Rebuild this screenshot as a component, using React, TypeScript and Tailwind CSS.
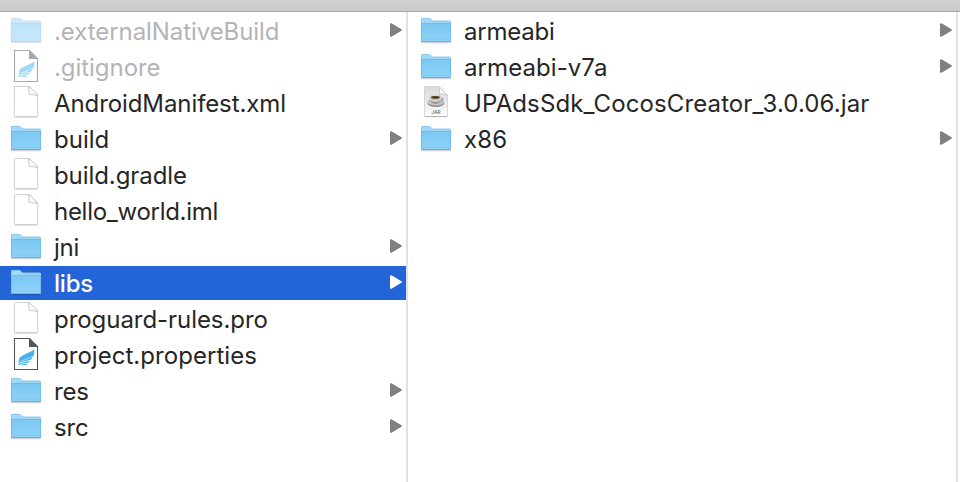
import React from "react";

type Kind = "folder" | "doc" | "wing" | "jar";
type Entry = { name: string; kind: Kind; dim?: boolean; selected?: boolean; tracking?: string };

const left: Entry[] = [
  { name: ".externalNativeBuild", kind: "folder", dim: true, tracking: "tracking-[-0.07px]" },
  { name: ".gitignore", kind: "wing", dim: true, tracking: "tracking-[-0.05px]" },
  { name: "AndroidManifest.xml", kind: "doc", tracking: "tracking-[-0.09px]" },
  { name: "build", kind: "folder" },
  { name: "build.gradle", kind: "doc", tracking: "tracking-[-0.08px]" },
  { name: "hello_world.iml", kind: "doc", tracking: "tracking-[-0.28px]" },
  { name: "jni", kind: "folder", tracking: "tracking-[-0.2px]" },
  { name: "libs", kind: "folder", selected: true, tracking: "tracking-[-0.2px]" },
  { name: "proguard-rules.pro", kind: "doc", tracking: "tracking-[-0.05px]" },
  { name: "project.properties", kind: "wing", tracking: "tracking-[0.04px]" },
  { name: "res", kind: "folder", tracking: "tracking-[-0.2px]" },
  { name: "src", kind: "folder", tracking: "tracking-[-0.1px]" },
];

const right: Entry[] = [
  { name: "armeabi", kind: "folder", tracking: "tracking-[-0.2px]" },
  { name: "armeabi-v7a", kind: "folder", tracking: "tracking-[0.08px]" },
  { name: "UPAdsSdk_CocosCreator_3.0.06.jar", kind: "jar", tracking: "tracking-[0.11px]" },
  { name: "x86", kind: "folder", tracking: "tracking-[0.2px]" },
];

function Defs() {
  return (
    <svg width="0" height="0" className="absolute">
      <defs>
        <linearGradient id="folder" x1="0" y1="0" x2="0" y2="1">
          <stop offset="0" stopColor="#7bc8f3" />
          <stop offset="1" stopColor="#8fd2f8" />
        </linearGradient>
        <linearGradient id="jar" x1="0" y1="0" x2="0" y2="1">
          <stop offset="0" stopColor="#d9d9d9" />
          <stop offset="0.55" stopColor="#ececec" />
          <stop offset="1" stopColor="#fdfdfd" />
        </linearGradient>
      </defs>
    </svg>
  );
}

function Folder() {
  return (
    <>
      <path d="M1 27.5h30v1q0 .8-1 .8H2q-1 0-1-.8z" fill="#000" opacity=".16" />
      <path d="M1 5.3Q1 4 2.3 4H9q.8 0 1.3.5l1.8 1.8q.5.5 1.3.5h16.3Q31 6.800 31 8v4H1z" fill="#a3d9f8" />
      <path d="M1.500 8V5.300q0-.9.9-.9H9q.7 0 1.100.4l1.900 1.900q.4.400 1.200.400h16.400q.9 0 .9.900" fill="none" stroke="#7cbfe6" strokeWidth=".7" />
      <path d="M1 9h30v18.200q0 .8-.8.8H1.800q-.8 0-.8-.8z" fill="url(#folder)" />
      <path d="M1 9.400h30" stroke="#6fb9e4" strokeWidth=".9" />
      <path d="M1.400 9v18M30.600 9v18" stroke="#6cb4df" strokeWidth=".7" />
      <path d="M1.500 25h29" stroke="#7fc5ee" strokeWidth=".7" />
      <path d="M1.300 27.600h29.400" stroke="#65aad5" strokeWidth=".9" />
    </>
  );
}

function Doc() {
  return (
    <>
      <path d="M4.500 31h23.200" stroke="#000" strokeOpacity=".22" strokeWidth="1" />
      <path d="M4.400 1.700q0-1.200 1.200-1.200H18q1.500 0 2.600 1.100l5.900 6q1.200 1.200 1.200 2.800v19q0 1.100-1.100 1.100h-21q-1.200 0-1.200-1.100z" fill="#fff" stroke="#cbcbcb" strokeWidth=".9" />
      <path d="M18.300.700q.8 1 .6 7.900 6.800-.2 8.400 1.300l-2-3.300-4.400-4.500z" fill="#fafafa" stroke="#c4c4c4" strokeWidth=".9" strokeLinejoin="round" />
    </>
  );
}

function Wing() {
  return (
    <>
      <path d="M4.500.500h15l8 8v23h-23z" fill="#fff" />
      <path d="M4.500.500h15l8 8v23h-23z" fill="none" stroke="#555" strokeWidth="1.100" />
      <path d="M19 0l9 9h-9z" fill="#555" />
      <path d="M24.400 11.200C20.500 14.600 12.600 16.200 9.700 19.800 8.900 20.900 9 22.200 8.700 23.400 13 23 17.800 21.300 20.900 18.800H22.800C24.100 16.800 24.600 14 24.400 11.200z" fill="#45b0f3" />
      <path d="M22.300 19.200L20.700 22.200H18.300C15 23.400 11.500 24.100 8.300 24.900L8.600 23.200C13.500 23.200 17.600 21.500 20.600 19.200z" fill="#45b0f3" />
      <path d="M8 25.700C11.500 25 15 23.900 18.400 22.900H20L18.200 24.700H16.600C14 25.400 11.500 26 8.800 26.900z" fill="#45b0f3" />
      <path d="M10.500 27.200q3.500-1.300 7-1.700l-1.200 1.700z" fill="#45b0f3" />
      <path d="M10.500 22.600q5.200-.7 9.600-3.500" fill="none" stroke="#fff" strokeOpacity=".6" strokeWidth=".5" />
    </>
  );
}

function Jar() {
  return (
    <>
      <path d="M4.500 1.600q0-1.200 1.200-1.200H19l8.500 9v20q0 1.100-1.100 1.100H5.600q-1.100 0-1.100-1.100z" fill="url(#jar)" stroke="#cfcfcf" strokeWidth=".8" />
      <path d="M4.700 30.700h22.700" stroke="#000" strokeOpacity=".2" />
      <path d="M19 .500q.9 2 .4 7.400 5.800-.1 8 1.600z" fill="#fafafa" stroke="#bdbdbd" strokeWidth=".7" />
      <ellipse cx="15.900" cy="17" rx="8.500" ry="4" fill="#8b8b8b" />
      <ellipse cx="15.900" cy="15.900" rx="8.400" ry="3.600" fill="#c2c2c2" />
      <path d="M20.400 12.300c3.300-1.100 3.500 2.500-.8 3" fill="none" stroke="#999" strokeWidth="1.100" />
      <path d="M9.500 11.500c0 4.400 2.300 6.500 5.900 6.500s5.900-2.100 5.900-6.500z" fill="#d2d2d2" />
      <path d="M10.300 14c.8 2.700 2.400 4 5.100 4s4.500-1.300 5.200-4c-2 2.500-7.500 2.500-10.300 0z" fill="#999" />
      <ellipse cx="15.400" cy="11.300" rx="5.900" ry="2.300" fill="#eee" stroke="#aaa" strokeWidth=".5" />
      <ellipse cx="15.400" cy="11.500" rx="4.500" ry="1.400" fill="#4a381f" />
      <path d="M12 12.100q3.400 1.200 6.500 0" stroke="#8e6b38" strokeWidth=".7" fill="none" />
      <text x="16" y="28.200" textAnchor="middle" fontSize="4.600" fontFamily="Inter, sans-serif" fontWeight="500" fill="#666">JAR</text>
    </>
  );
}

function Icon({ kind, dim }: { kind: Kind; dim?: boolean }) {
  return (
    <svg viewBox="0 0 32 32" className={`h-8 w-8 shrink-0 ${dim ? "opacity-50" : ""}`}>
      {kind === "folder" && <Folder />}
      {kind === "doc" && <Doc />}
      {kind === "wing" && <Wing />}
      {kind === "jar" && <Jar />}
    </svg>
  );
}

function Row({ entry, pad }: { entry: Entry; pad: string }) {
  const color = entry.selected ? "text-white font-medium" : entry.dim ? "text-[#b4b4b4]" : "text-[#262626]";
  return (
    <li className={`flex h-[34px] items-start gap-3 pr-1 ${pad} ${entry.selected ? "bg-[#2464d9]" : ""}`}>
      <Icon kind={entry.kind} dim={entry.dim} />
      <span className={`grow whitespace-nowrap text-[24px] leading-[35px] ${entry.tracking ?? ""} ${color}`}>{entry.name}</span>
      {entry.kind === "folder" && (
        <svg viewBox="0 0 12 14" className={`mt-[9px] h-[14px] w-3 shrink-0 ${entry.selected ? "text-white" : "text-[#808080]"}`}>
          <path d="M1 1.200L10.900 7 1 12.800z" fill="currentColor" stroke="currentColor" strokeWidth="2" strokeLinejoin="round" />
        </svg>
      )}
    </li>
  );
}

export default function App() {
  return (
    <div className="flex h-[482px] w-[960px] flex-col overflow-hidden bg-white font-['Inter',sans-serif]">
      <Defs />
      <header className="h-3 shrink-0 border-b border-[#a5a5a5] bg-gradient-to-b from-[#d0d0d0] to-[#cacaca]" />
      <main className="flex grow">
        <ul className="flex w-[408px] flex-col gap-0.5 border-r-2 border-[#e2e2e2] pt-0.5">
          {left.map((e) => (
            <Row key={e.name} entry={e} pad="pl-2.5" />
          ))}
        </ul>
        <ul className="flex w-[550px] flex-col gap-0.5 border-r-2 border-[#e2e2e2] pt-0.5">
          {right.map((e) => (
            <Row key={e.name} entry={e} pad="pl-3" />
          ))}
        </ul>
      </main>
    </div>
  );
}
